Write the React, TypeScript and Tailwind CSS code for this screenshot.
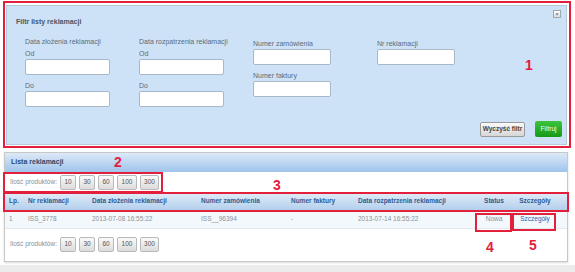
import React from "react";

const font = { fontFamily: '"Liberation Sans", Arial, sans-serif' };

function Field({ label, w }: { label: string; w: string }) {
  return (
    <div className="flex flex-col">
      <div className="text-[7px] leading-[9px] text-[#5b6b7c] h-[9px]">{label}</div>
      <div className={`${w} h-[16px] mt-[1px] bg-white border border-[#a9b8c6] rounded-[2px]`} />
    </div>
  );
}

function Pager() {
  const vals = ["10", "30", "60", "100", "300"];
  const widths = ["w-[16px]", "w-[16px]", "w-[16px]", "w-[20px]", "w-[19px]"];
  return (
    <div className="flex items-center">
      <span className="text-[6.5px] text-[#8a8f96] w-[50px]">Ilość produktów:</span>
      <div className="flex gap-[3px]">
        {vals.map((v, i) => (
          <div
            key={v}
            className={`${widths[i]} h-[15px] flex items-center justify-center text-[6.5px] text-[#555] border border-[#b9b9b9] rounded-[2px] bg-gradient-to-b from-[#fafafa] to-[#dcdcdc]`}
          >
            {v}
          </div>
        ))}
      </div>
    </div>
  );
}

const cols = [
  "w-[19px]",
  "w-[64px]",
  "w-[109px]",
  "w-[90px]",
  "w-[67px]",
  "w-[118px]",
  "w-[36px]",
  "w-[46px]",
];

export default function App() {
  return (
    <div className="relative w-[575px] h-[272px] bg-white overflow-hidden" style={font}>
      <div className="pt-[5px] pl-[6px]">
        {/* Filter panel */}
        <div className="relative w-[561px] h-[140px] bg-[#cde2f6] border border-[#b9c9d9] pl-[9px] pt-[11px]">
          <div className="text-[7px] font-bold text-[#4a5868] leading-[9px]">Filtr listy reklamacji</div>
          <div className="flex mt-[11px] pl-[9px]">
            <div className="w-[114px] flex flex-col">
              <div className="text-[7px] leading-[9px] text-[#5b6b7c]">Data złożenia reklamacji</div>
              <div className="mt-[3px]">
                <Field label="Od" w="w-[85px]" />
              </div>
              <div className="mt-[6px]">
                <Field label="Do" w="w-[85px]" />
              </div>
            </div>
            <div className="w-[114px] flex flex-col">
              <div className="text-[7px] leading-[9px] text-[#5b6b7c]">Data rozpatrzenia reklamacji</div>
              <div className="mt-[3px]">
                <Field label="Od" w="w-[85px]" />
              </div>
              <div className="mt-[6px]">
                <Field label="Do" w="w-[85px]" />
              </div>
            </div>
            <div className="w-[124px] flex flex-col pt-[2px]">
              <Field label="Numer zamówienia" w="w-[78px]" />
              <div className="mt-[6px]">
                <Field label="Numer faktury" w="w-[78px]" />
              </div>
            </div>
            <div className="flex flex-col pt-[2px]">
              <Field label="Nr reklamacji" w="w-[78px]" />
            </div>
          </div>
          <div className="absolute right-[4px] bottom-[7px] flex items-center gap-[10px]">
            <div className="w-[45px] h-[15px] flex items-center justify-center text-[6.5px] font-bold text-[#444] border border-[#9a9a9a] rounded-[2px] bg-gradient-to-b from-[#fbfbfb] to-[#d6d6d6]">
              Wyczyść filtr
            </div>
            <div className="w-[27px] h-[16px] flex items-center justify-center text-[6.5px] text-[#eaffea] rounded-[2px] bg-gradient-to-b from-[#3cc43c] to-[#169a16]">
              Filtruj
            </div>
          </div>
          <div className="absolute right-[5px] top-[4px] w-[8px] h-[8px] border border-[#9aa] bg-gradient-to-b from-white to-[#ddd] flex items-center justify-center text-[6px] leading-none text-[#555]">
            ×
          </div>
        </div>
      </div>

      {/* List panel */}
      <div className="mt-[7px] ml-[4px] w-[564px] h-[110px] border border-[#c8c8c8] shadow-[0_1px_2px_rgba(0,0,0,0.15)] bg-white">
        <div className="h-[19px] flex items-center pl-[6px] bg-gradient-to-b from-[#dde9f7] to-[#9ec4ec] text-[7px] font-bold text-[#2d4b6e]">
          Lista reklamacji
        </div>
        <div className="h-[20px] flex items-center pl-[5px]">
          <Pager />
        </div>
        <div className="h-[18px] flex items-center pl-[4px] bg-gradient-to-b from-[#e4eef9] to-[#b3cfec] text-[6.5px] font-bold text-[#2e5b92]">
          <div className={cols[0]}>Lp.</div>
          <div className={cols[1]}>Nr reklamacji</div>
          <div className={cols[2]}>Data złożenia reklamacji</div>
          <div className={cols[3]}>Numer zamówienia</div>
          <div className={cols[4]}>Numer faktury</div>
          <div className={cols[5]}>Data rozpatrzenia reklamacji</div>
          <div className={`${cols[6]} text-center`}>Status</div>
          <div className={`${cols[7]} text-center`}>Szczegóły</div>
        </div>
        <div className="h-[19px] flex items-center pl-[4px] bg-[#f3f8fd] text-[6.5px] text-[#8b9096] border-b border-[#e3e9ef]">
          <div className={cols[0]}>1</div>
          <div className={cols[1]}>ISS_3778</div>
          <div className={cols[2]}>2013-07-08 16:55:22</div>
          <div className={cols[3]}>ISS__96394</div>
          <div className={cols[4]}>-</div>
          <div className={cols[5]}>2013-07-14 16:55:22</div>
          <div className={`${cols[6]} text-center`}>Nowa</div>
          <div className={`${cols[7]} text-center text-[#2a5fa8]`}>Szczegóły</div>
        </div>
        <div className="h-[30px] flex items-center pl-[5px]">
          <Pager />
        </div>
      </div>
      <div className="absolute left-0 right-0 bottom-0 h-[7px] bg-[#ececec]" />

      {/* Annotations */}
      <div className="absolute left-[3px] top-[1px] w-[568px] h-[147px] border-2 border-[#e3203c]" />
      <div className="absolute left-[525px] top-[58px] text-[14px] font-bold text-[#e3203c] leading-none">1</div>
      <div className="absolute left-[3px] top-[172px] w-[160px] h-[21px] border-2 border-[#e3203c]" />
      <div className="absolute left-[114px] top-[155px] text-[14px] font-bold text-[#e3203c] leading-none">2</div>
      <div className="absolute left-[3px] top-[192px] w-[566px] h-[20px] border-2 border-[#e3203c]" />
      <div className="absolute left-[273px] top-[178px] text-[14px] font-bold text-[#e3203c] leading-none">3</div>
      <div className="absolute left-[475px] top-[213px] w-[37px] h-[19px] border-2 border-[#e3203c]" />
      <div className="absolute left-[512px] top-[213px] w-[44px] h-[18px] border-2 border-[#e3203c]" />
      <div className="absolute left-[486px] top-[240px] text-[14px] font-bold text-[#e3203c] leading-none">4</div>
      <div className="absolute left-[529px] top-[238px] text-[14px] font-bold text-[#e3203c] leading-none">5</div>
    </div>
  );
}
